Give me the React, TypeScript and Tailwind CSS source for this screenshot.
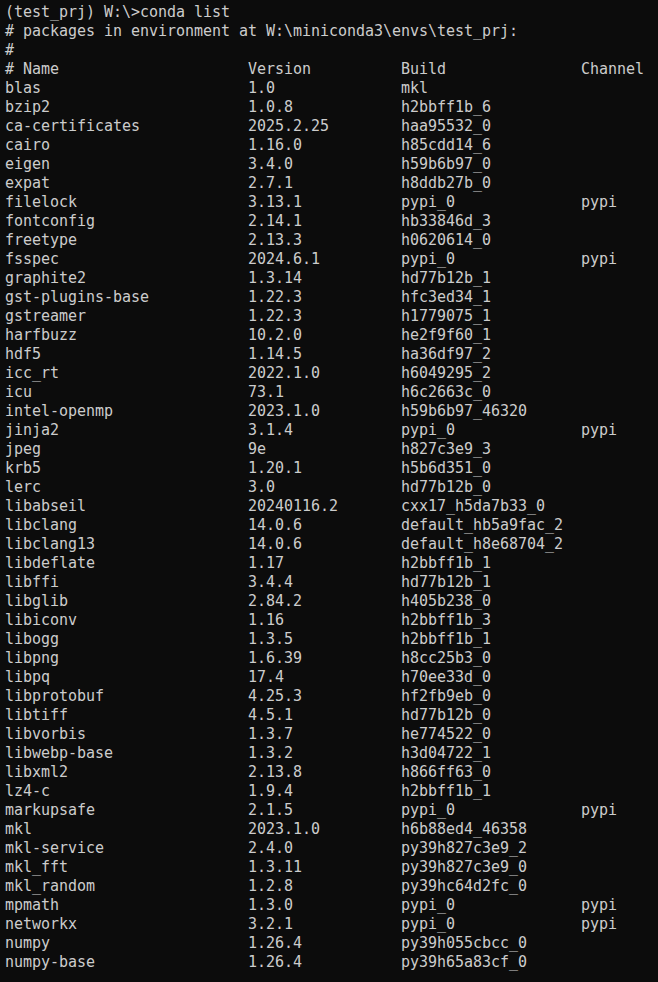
import React from "react";

const pkgs: [string, string, string, string?][] = [
  ["blas", "1.0", "mkl"],
  ["bzip2", "1.0.8", "h2bbff1b_6"],
  ["ca-certificates", "2025.2.25", "haa95532_0"],
  ["cairo", "1.16.0", "h85cdd14_6"],
  ["eigen", "3.4.0", "h59b6b97_0"],
  ["expat", "2.7.1", "h8ddb27b_0"],
  ["filelock", "3.13.1", "pypi_0", "pypi"],
  ["fontconfig", "2.14.1", "hb33846d_3"],
  ["freetype", "2.13.3", "h0620614_0"],
  ["fsspec", "2024.6.1", "pypi_0", "pypi"],
  ["graphite2", "1.3.14", "hd77b12b_1"],
  ["gst-plugins-base", "1.22.3", "hfc3ed34_1"],
  ["gstreamer", "1.22.3", "h1779075_1"],
  ["harfbuzz", "10.2.0", "he2f9f60_1"],
  ["hdf5", "1.14.5", "ha36df97_2"],
  ["icc_rt", "2022.1.0", "h6049295_2"],
  ["icu", "73.1", "h6c2663c_0"],
  ["intel-openmp", "2023.1.0", "h59b6b97_46320"],
  ["jinja2", "3.1.4", "pypi_0", "pypi"],
  ["jpeg", "9e", "h827c3e9_3"],
  ["krb5", "1.20.1", "h5b6d351_0"],
  ["lerc", "3.0", "hd77b12b_0"],
  ["libabseil", "20240116.2", "cxx17_h5da7b33_0"],
  ["libclang", "14.0.6", "default_hb5a9fac_2"],
  ["libclang13", "14.0.6", "default_h8e68704_2"],
  ["libdeflate", "1.17", "h2bbff1b_1"],
  ["libffi", "3.4.4", "hd77b12b_1"],
  ["libglib", "2.84.2", "h405b238_0"],
  ["libiconv", "1.16", "h2bbff1b_3"],
  ["libogg", "1.3.5", "h2bbff1b_1"],
  ["libpng", "1.6.39", "h8cc25b3_0"],
  ["libpq", "17.4", "h70ee33d_0"],
  ["libprotobuf", "4.25.3", "hf2fb9eb_0"],
  ["libtiff", "4.5.1", "hd77b12b_0"],
  ["libvorbis", "1.3.7", "he774522_0"],
  ["libwebp-base", "1.3.2", "h3d04722_1"],
  ["libxml2", "2.13.8", "h866ff63_0"],
  ["lz4-c", "1.9.4", "h2bbff1b_1"],
  ["markupsafe", "2.1.5", "pypi_0", "pypi"],
  ["mkl", "2023.1.0", "h6b88ed4_46358"],
  ["mkl-service", "2.4.0", "py39h827c3e9_2"],
  ["mkl_fft", "1.3.11", "py39h827c3e9_0"],
  ["mkl_random", "1.2.8", "py39hc64d2fc_0"],
  ["mpmath", "1.3.0", "pypi_0", "pypi"],
  ["networkx", "3.2.1", "pypi_0", "pypi"],
  ["numpy", "1.26.4", "py39h055cbcc_0"],
  ["numpy-base", "1.26.4", "py39h65a83cf_0"],
];

const row = (a: string, b: string, c: string, d = "") =>
  (a.padEnd(27) + b.padEnd(17) + c.padEnd(20) + d).trimEnd();

export default function App() {
  const lines = [
    "(test_prj) W:\\>conda list",
    "# packages in environment at W:\\miniconda3\\envs\\test_prj:",
    "#",
    row("# Name", "Version", "Build", "Channel"),
    ...pkgs.map((p) => row(p[0], p[1], p[2], p[3])),
  ];

  return (
    <div className="w-[658px] h-[982px] bg-[#0c0c0c] overflow-hidden">
      <pre className="pl-[5px] pt-[3px] m-0 text-[#cccccc] text-[15px] leading-[19px] tracking-[-0.03px] whitespace-pre font-['DejaVu_Sans_Mono','Liberation_Mono',monospace]">
        {lines.join("\n")}
      </pre>
    </div>
  );
}
